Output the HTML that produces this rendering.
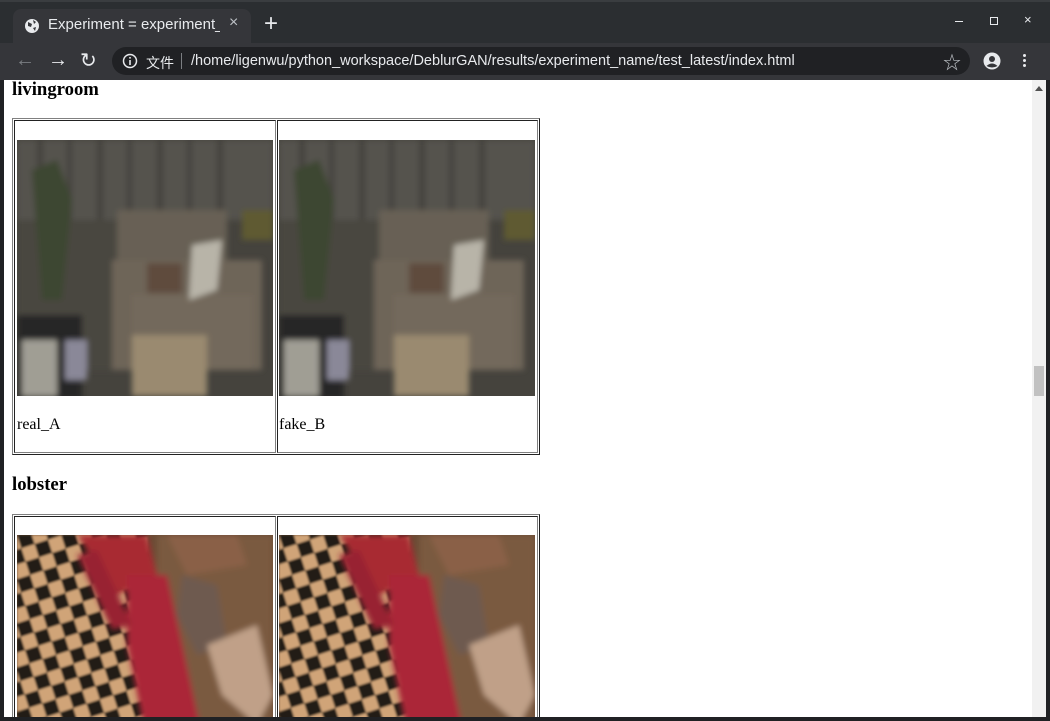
<!DOCTYPE html>
<html><head><meta charset="utf-8"><style>
*{margin:0;padding:0;box-sizing:border-box}
body{width:1050px;height:721px;overflow:hidden;background:#202124;position:relative;font-family:"Liberation Sans","Noto Sans CJK SC",sans-serif}
.abs{position:absolute}
.tt{font-family:"Liberation Serif",serif;color:#000}
</style></head><body>
<svg width="0" height="0" style="position:absolute">
<defs>
<filter id="bl"><feGaussianBlur stdDeviation="3"/></filter>
<filter id="bl2"><feGaussianBlur stdDeviation="1"/></filter>
<symbol id="lr" viewBox="0 0 256 256">
<rect width="256" height="256" fill="#45433d"/>
<g filter="url(#bl)">
<rect x="0" y="0" width="256" height="80" fill="#55534d"/>
<g fill="#45433e"><rect x="20" y="0" width="6" height="80"/><rect x="50" y="0" width="5" height="80"/><rect x="80" y="0" width="6" height="80"/><rect x="110" y="0" width="5" height="80"/><rect x="140" y="0" width="6" height="80"/><rect x="170" y="0" width="5" height="80"/><rect x="200" y="0" width="6" height="80"/></g>
<rect x="0" y="80" width="100" height="150" fill="#48463f"/>
<path d="M15 30 L40 20 L55 60 L45 160 L25 160 Z" fill="#3c4630"/>
<rect x="100" y="70" width="110" height="90" fill="#676054"/>
<rect x="95" y="120" width="150" height="110" fill="#6e6558"/>
<rect x="115" y="155" width="120" height="75" fill="#73695c"/>
<path d="M175 105 L205 100 L200 150 L172 160 Z" fill="#b8b4a8"/>
<rect x="130" y="123" width="35" height="30" fill="#5e4c3c"/>
<rect x="0" y="175" width="65" height="85" fill="#262628"/>
<rect x="5" y="200" width="35" height="56" fill="#a09e94"/>
<rect x="48" y="200" width="22" height="40" fill="#8a8898"/>
<rect x="115" y="195" width="75" height="61" fill="#9a8a70"/>
<rect x="225" y="70" width="31" height="30" fill="#5e5a30"/>
</g>
</symbol>
<pattern id="chk" width="28" height="28" patternUnits="userSpaceOnUse" patternTransform="rotate(-18)">
<rect width="28" height="28" fill="#d0a478"/><rect width="14" height="14" fill="#241c18"/><rect x="14" y="14" width="14" height="14" fill="#241c18"/>
</pattern>
<symbol id="lb" viewBox="0 0 256 256">
<rect width="256" height="256" fill="#6a4a34"/>
<rect x="0" y="0" width="130" height="256" fill="url(#chk)" filter="url(#bl2)"/>
<g filter="url(#bl)">
<rect x="140" y="0" width="116" height="256" fill="#7a5a40"/>
<path d="M165 40 L200 50 L210 110 L180 120 L160 80 Z" fill="#6e5a50"/>
<path d="M190 110 L240 90 L256 160 L240 190 L205 160 Z" fill="#c0a088"/>
<path d="M60 0 L130 0 L140 40 L100 60 Z" fill="#a82a30"/>
<path d="M110 40 L150 40 L185 200 L195 256 L140 256 L110 110 Z" fill="#ab2838"/>
<path d="M60 20 L80 15 L115 90 L95 95 Z" fill="#982430"/>
<path d="M150 0 L220 0 L230 30 L170 40 Z" fill="#8a6046"/>
</g>
</symbol>
</defs>
</svg>

<div class="abs" style="left:0;top:0;width:1050px;height:43px;background:#2b2e31;border-top:2px solid #3a3d40"></div>
<div class="abs" style="left:13px;top:9px;width:238px;height:34px;background:#35363a;border-radius:8px 8px 0 0"></div>
<svg class="abs" style="left:24px;top:18px" width="16" height="16" viewBox="0 0 16 16"><circle cx="8" cy="8" r="7" fill="#e8eaed"/><path d="M4 4 L8 6 L7 9 L4 8 Z M9 10 L12 9 L11 13 Z M9 2 L12 4 L10 6Z" fill="#35363a"/></svg>
<div class="abs" style="left:48px;top:16px;font-size:15px;color:#e8eaed;white-space:nowrap;width:172px;overflow:hidden">Experiment = experiment_</div>
<div class="abs" style="left:229px;top:14px;font-size:16px;color:#bdc1c6">×</div>
<div class="abs" style="left:264px;top:10px;font-size:24px;color:#e8eaed;font-weight:300">+</div>
<div class="abs" style="left:955px;top:21px;width:8px;height:1px;background:#e8eaed"></div>
<div class="abs" style="left:990px;top:17px;width:8px;height:8px;border:1px solid #e8eaed"></div>
<div class="abs" style="left:1024px;top:12px;font-size:13px;color:#e8eaed">×</div>
<div class="abs" style="left:0;top:43px;width:1050px;height:37px;background:#35363a"></div>
<div class="abs" style="left:15px;top:49px;font-size:20px;color:#7b7e82">←</div>
<div class="abs" style="left:48px;top:49px;font-size:20px;color:#e8eaed">→</div>
<div class="abs" style="left:80px;top:48px;font-size:20px;color:#e8eaed">↻</div>
<div class="abs" style="left:112px;top:47px;width:858px;height:28px;background:#202124;border-radius:14px"></div>
<svg class="abs" style="left:122px;top:53px" width="16" height="16" viewBox="0 0 16 16"><circle cx="8" cy="8" r="6.5" fill="none" stroke="#e8eaed" stroke-width="1.5"/><rect x="7.2" y="7" width="1.6" height="5" fill="#e8eaed"/><rect x="7.2" y="4" width="1.6" height="1.6" fill="#e8eaed"/></svg>
<div class="abs" style="left:146px;top:53px;font-size:14px;color:#e8eaed">文件</div>
<div class="abs" style="left:181px;top:53px;width:1px;height:16px;background:#7b7e82"></div>
<div class="abs" style="left:191px;top:53px;font-size:14.5px;color:#e8eaed;white-space:nowrap">/home/ligenwu/python_workspace/DeblurGAN/results/experiment_name/test_latest/index.html</div>
<div class="abs" style="left:943px;top:49px;font-size:18px;color:#bdc1c6">☆</div>
<svg class="abs" style="left:983px;top:52px" width="18" height="18" viewBox="0 0 18 18"><circle cx="9" cy="9" r="8.5" fill="#e8eaed"/><circle cx="9" cy="7" r="3" fill="#35363a"/><path d="M3.5 14 Q9 9 14.5 14 Q9 17 3.5 14Z" fill="#35363a"/></svg>
<div class="abs" style="left:1023px;top:54px;width:3px;height:3px;background:#e8eaed;border-radius:50%;box-shadow:0 5px 0 #e8eaed,0 10px 0 #e8eaed"></div>
<div class="abs" style="left:4px;top:80px;width:1042px;height:637px;background:#fff;overflow:hidden">
<div class="abs tt" style="left:8px;top:-1px;font-size:18.7px;font-weight:bold">livingroom</div>
<div class="abs" style="left:8px;top:38px;width:528px;height:337px;border:1px solid;border-color:#808080 #222 #222 #808080"></div>
<div class="abs" style="left:10px;top:40px;width:262px;height:333px;border:1px solid;border-color:#222 #808080 #808080 #222"></div>
<div class="abs" style="left:273px;top:40px;width:261px;height:333px;border:1px solid;border-color:#222 #808080 #808080 #222"></div>
<svg class="abs" style="left:13px;top:60px" width="256" height="256"><use href="#lr"/></svg>
<svg class="abs" style="left:275px;top:60px" width="256" height="256"><use href="#lr"/></svg>
<div class="abs tt" style="left:13px;top:336px;font-size:16px">real_A</div>
<div class="abs tt" style="left:275px;top:336px;font-size:16px">fake_B</div>
<div class="abs tt" style="left:8px;top:394px;font-size:18.7px;font-weight:bold">lobster</div>
<div class="abs" style="left:8px;top:434px;width:528px;height:337px;border:1px solid;border-color:#808080 #222 #222 #808080"></div>
<div class="abs" style="left:10px;top:436px;width:262px;height:333px;border:1px solid;border-color:#222 #808080 #808080 #222"></div>
<div class="abs" style="left:273px;top:436px;width:261px;height:333px;border:1px solid;border-color:#222 #808080 #808080 #222"></div>
<svg class="abs" style="left:13px;top:455px" width="256" height="182"><use href="#lb" width="256" height="256"/></svg>
<svg class="abs" style="left:275px;top:455px" width="256" height="182"><use href="#lb" width="256" height="256"/></svg>
<div class="abs" style="left:1028px;top:0;width:14px;height:637px;background:#f1f1f1"></div>
<div class="abs" style="left:1031px;top:6px;width:0;height:0;border-left:4px solid transparent;border-right:4px solid transparent;border-bottom:5px solid #505050"></div>
<div class="abs" style="left:1030px;top:286px;width:10px;height:30px;background:#c1c1c1"></div>
</div>
</body></html>
